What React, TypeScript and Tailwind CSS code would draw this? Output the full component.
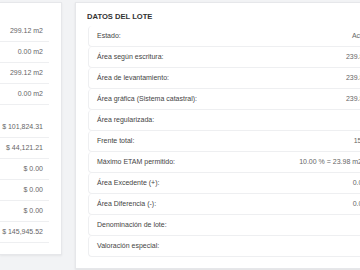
const areas = ["299.12 m2", "0.00 m2", "299.12 m2", "0.00 m2"];
const montos = ["$ 101,824.31", "$ 44,121.21", "$ 0.00", "$ 0.00", "$ 0.00", "$ 145,945.52"];

// [label, value, extra right margin for value]
const lote: [string, string, string][] = [
  ["Estado:", "Activo", "mr-[8px]"],
  ["Área según escritura:", "239.80 m2", ""],
  ["Área de levantamiento:", "239.80 m2", ""],
  ["Área gráfica (Sistema catastral):", "239.80 m2", ""],
  ["Área regularizada:", "", ""],
  ["Frente total:", "15.00 m", ""],
  ["Máximo ETAM permitido:", "10.00 % = 23.98 m2", "mr-[17px]"],
  ["Área Excedente (+):", "0.00 m2", "mr-[1px]"],
  ["Área Diferencia (-):", "0.00 m2", "mr-[1px]"],
  ["Denominación de lote:", "", ""],
  ["Valoración especial:", "", ""],
];

function ValueRow({ value }: { value: string }) {
  return (
    <div className="h-[21px] flex items-center justify-end pr-[6px] border-b border-[#eeeff1] text-[7px] text-[#666]">
      {value}
    </div>
  );
}

export default function App() {
  return (
    <div
      className="w-[360px] h-[270px] overflow-hidden bg-[#f2f3f5] flex items-start gap-[13px] pt-[2px]"
      style={{ fontFamily: '"Liberation Sans", Arial, sans-serif' }}
    >
      {/* resumen (recortado a la izquierda) */}
      <div className="w-[62px] shrink-0 bg-white border border-[#e6e7ea] border-l-0 shadow-[0_1px_2px_rgba(0,0,0,0.06)] pt-[18px] pr-[12px] pb-[11px]">
        <div>
          {areas.map((v, i) => (
            <ValueRow key={i} value={v} />
          ))}
        </div>
        <div className="mt-[12px]">
          {montos.map((v, i) => (
            <ValueRow key={i} value={v} />
          ))}
        </div>
      </div>

      {/* datos del lote */}
      <div className="w-[323px] shrink-0 bg-white border border-[#e6e7ea] shadow-[0_1px_2px_rgba(0,0,0,0.08)] pt-[8px] pl-[11px] pr-[12px] pb-[11px]">
        <h3 className="text-[7.6px] leading-[12px] font-semibold text-[#333] mb-[3px]">DATOS DEL LOTE</h3>
        <div className="ml-[1px]">
          {lote.map(([label, value, extra], i) => (
            <div
              key={i}
              className="h-[21px] flex items-center justify-between pl-[8px] pr-[6px] border-b border-l border-[#eeeff1] rounded-l-[4px] text-[7px]"
            >
              <span className="text-[#444]">{label}</span>
              <span className={`text-[#666] whitespace-nowrap ${extra}`}>{value}</span>
            </div>
          ))}
        </div>
      </div>
    </div>
  );
}
